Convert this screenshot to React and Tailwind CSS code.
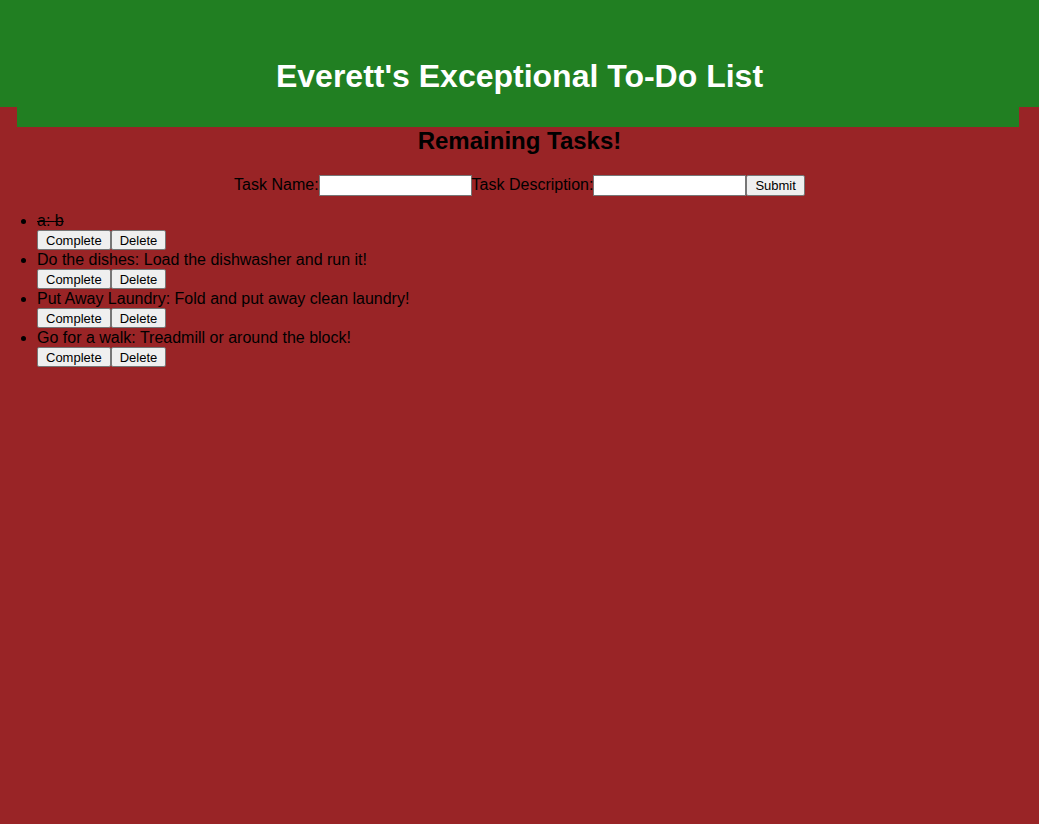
import React from "react";

const tasks = [
  { name: "a", desc: "b", done: true },
  { name: "Do the dishes", desc: "Load the dishwasher and run it!", done: false },
  { name: "Put Away Laundry", desc: "Fold and put away clean laundry!", done: false },
  { name: "Go for a walk", desc: "Treadmill or around the block!", done: false },
];

const btn =
  "h-[20px] px-[8px] text-[13px] leading-none text-black bg-[#efefef] border border-[#767676] rounded-[2px]";

export default function App() {
  return (
    <div className="min-h-[824px] bg-[#992426] text-black font-['Liberation_Sans',Arial,sans-serif]">
      {/* header */}
      <div className="bg-[#217f22] h-[107px] pt-[58px]">
        <h1 className="text-center text-white font-bold text-[32px] leading-[36px]">
          Everett's Exceptional To-Do List
        </h1>
      </div>
      <div className="ml-[17px] mr-[20px] h-[20px] bg-[#217f22]" />

      <h2 className="text-center font-bold text-[24px] leading-[28px]">Remaining Tasks!</h2>

      {/* form */}
      <form
        className="mt-[18px] flex items-center justify-center text-[16px]"
        onSubmit={(e) => e.preventDefault()}
      >
        <label>Task Name:</label>
        <input className="w-[153px] h-[21px] bg-white border border-[#767676]" />
        <label>Task Description:</label>
        <input className="w-[153px] h-[21px] bg-white border border-[#767676]" />
        <button className={btn + " h-[21px]"}>Submit</button>
      </form>

      {/* list */}
      <ul className="mt-[14px] pl-[37px] list-disc text-[16px]">
        {tasks.map((t, i) => (
          <li key={i} className="leading-[19px]">
            <div className={"h-[19px] " + (t.done ? "line-through" : "")}>
              {t.name}: {t.desc}
            </div>
            <div className="flex h-[20px]">
              <button className={btn}>Complete</button>
              <button className={btn}>Delete</button>
            </div>
          </li>
        ))}
      </ul>
    </div>
  );
}
